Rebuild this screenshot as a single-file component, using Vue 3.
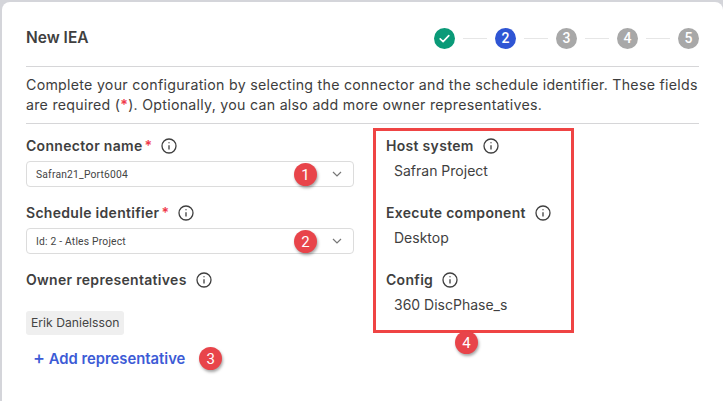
<template>
  <div class="page">
    <div class="card">
      <div class="header">
        <h1 class="title">New IEA</h1>
        <div class="steps">
          <template v-for="(step, i) in steps" :key="step.n">
            <span v-if="i > 0" class="step-line"></span>
            <span class="step" :class="step.state">
              <svg v-if="step.state === 'done'" width="13" height="13" viewBox="0 0 13 13">
                <path d="M2.2 6.8l2.9 2.8 5.7-6" fill="none" stroke="#fff" stroke-width="1.6" stroke-linecap="round" stroke-linejoin="round" />
              </svg>
              <template v-else>{{ step.n }}</template>
            </span>
          </template>
        </div>
      </div>

      <p class="intro">
        Complete your configuration by selecting the connector and the schedule identifier. These fields<br>
        are required (<span class="req">*</span>). Optionally, you can also add more owner representatives.
      </p>

      <div class="columns">
        <div class="left">
          <div class="field">
            <div class="label">Connector name<span class="req">*</span><svg class="info" viewBox="0 0 16 16"><circle cx="8" cy="8" r="7" /><path d="M8 7.2v4.2M8 4.3v1" /></svg></div>
            <div class="select">
              <span>Safran21_Port6004</span>
              <span class="badge over-select">1</span>
              <svg class="chev" width="10" height="6" viewBox="0 0 10 6"><path d="M1 1l4 4 4-4" /></svg>
            </div>
          </div>
          <div class="field">
            <div class="label">Schedule identifier<span class="req">*</span><svg class="info" viewBox="0 0 16 16"><circle cx="8" cy="8" r="7" /><path d="M8 7.2v4.2M8 4.3v1" /></svg></div>
            <div class="select">
              <span>Id: 2 - Atles Project</span>
              <span class="badge over-select">2</span>
              <svg class="chev" width="10" height="6" viewBox="0 0 10 6"><path d="M1 1l4 4 4-4" /></svg>
            </div>
          </div>
          <div class="label owner">Owner representatives<svg class="info" viewBox="0 0 16 16"><circle cx="8" cy="8" r="7" /><path d="M8 7.2v4.2M8 4.3v1" /></svg></div>
          <span class="chip">Erik Danielsson</span>
          <div class="add-row">
            <span class="add"><span class="plus">+</span> Add representative</span>
            <span class="badge">3</span>
          </div>
        </div>

        <div class="right">
          <div v-for="item in details" :key="item.label" class="detail">
            <div class="label">{{ item.label }}<svg class="info" viewBox="0 0 16 16"><circle cx="8" cy="8" r="7" /><path d="M8 7.2v4.2M8 4.3v1" /></svg></div>
            <div class="value">{{ item.value }}</div>
          </div>
          <span class="badge below-box">4</span>
        </div>
      </div>
    </div>
  </div>
</template>

<script setup>
const steps = [
  { n: 1, state: 'done' },
  { n: 2, state: 'current' },
  { n: 3, state: 'todo' },
  { n: 4, state: 'todo' },
  { n: 5, state: 'todo' }
]

const details = [
  { label: 'Host system', value: 'Safran Project' },
  { label: 'Execute component', value: 'Desktop' },
  { label: 'Config', value: '360 DiscPhase_s' }
]
</script>

<style>
html, body {
  margin: 0;
  background: #d4d5da;
}
</style>

<style scoped>
.page {
  width: 723px;
  height: 401px;
  overflow: hidden;
  padding: 2px 0 0 2px;
  box-sizing: border-box;
  font-family: Inter, "Open Sans", sans-serif;
  color: #3d3d3d;
}

.card {
  width: 721px;
  height: 410px;
  box-sizing: border-box;
  background: #fff;
  border-radius: 8px;
  padding: 0 24px 0 24px;
}

.header {
  display: flex;
  align-items: center;
  justify-content: space-between;
  border-bottom: 1px solid #d6d6d8;
  padding-top: 8px;
  box-sizing: border-box;
  height: 65px;
}

.title {
  margin: 0 0 2px;
  font-size: 15.5px;
  font-weight: 600;
  color: #3f3f3f;
}

.steps {
  display: flex;
  align-items: center;
  gap: 8px;
}

.step {
  width: 21px;
  height: 21px;
  border-radius: 50%;
  display: flex;
  align-items: center;
  justify-content: center;
  color: #fff;
  font-family: Roboto, sans-serif;
  font-size: 14px;
  font-weight: 500;
  background: #a8a8a8;
}

.step.done {
  background: #0a9a78;
}

.step.current {
  background: #2f55d4;
}

.step-line {
  width: 24px;
  height: 1px;
  background: #e6e6e6;
}

.intro {
  margin: 0;
  height: 57px;
  box-sizing: border-box;
  padding-top: 8px;
  font-size: 14.2px;
  line-height: 20px;
  letter-spacing: 0.27px;
  border-bottom: 1px solid #d6d6d8;
  white-space: nowrap;
}

.req {
  color: #f0384a;
  font-weight: 600;
}

.columns {
  display: flex;
  gap: 19px;
  padding-top: 4px;
}

.left {
  width: 328px;
  padding-top: 8px;
}

.field {
  height: 67px;
}

.label {
  display: flex;
  align-items: center;
  height: 19px;
  font-size: 14px;
  font-weight: 600;
  letter-spacing: 0.3px;
  color: #3f3f3f;
  white-space: nowrap;
}

.label .req {
  margin-left: 2px;
  font-size: 14px;
}

.info {
  width: 16px;
  height: 16px;
  margin-left: 9px;
  fill: none;
  stroke: #3f3f3f;
  stroke-width: 1.3;
}

.select {
  margin-top: 6px;
  height: 26px;
  box-sizing: border-box;
  border: 1px solid #dcdcdc;
  border-radius: 4px;
  display: flex;
  align-items: center;
  padding: 0 11px 0 9px;
  font-family: Roboto, sans-serif;
  font-size: 10.3px;
  letter-spacing: 0.2px;
  color: #444;
  position: relative;
}

.chev {
  margin-left: auto;
  fill: none;
  stroke: #777;
  stroke-width: 1.2;
}

.badge {
  width: 23px;
  height: 23px;
  border-radius: 50%;
  background: #e8444a;
  color: #fff;
  font-family: Roboto, sans-serif;
  font-size: 15px;
  display: flex;
  align-items: center;
  justify-content: center;
  box-shadow: 1px 2px 3px rgba(0, 0, 0, 0.35);
}

.over-select {
  position: absolute;
  left: 267px;
  top: 1px;
}

.chip {
  display: inline-block;
  margin-top: 22px;
  height: 24px;
  line-height: 24px;
  padding: 0 5px;
  background: #efefef;
  border-radius: 3px;
  font-size: 12.2px;
  color: #444;
}

.add-row {
  display: flex;
  align-items: center;
  gap: 14px;
  margin-top: 12px;
  padding-left: 7px;
}

.add {
  font-size: 14.8px;
  font-weight: 600;
  color: #3c5bd6;
  white-space: nowrap;
}

.plus {
  font-weight: 500;
  font-size: 18px;
  line-height: 14px;
}

.right {
  position: relative;
  width: 201px;
  height: 205px;
  box-sizing: border-box;
  border: 3px solid #ef4444;
  padding: 5px 10px 0;
}

.detail {
  height: 67px;
}

.value {
  margin-top: 7px;
  padding-left: 8px;
  font-size: 14px;
  line-height: 18px;
  color: #3f3f3f;
}

.below-box {
  position: absolute;
  left: 79px;
  top: 200px;
}
</style>
